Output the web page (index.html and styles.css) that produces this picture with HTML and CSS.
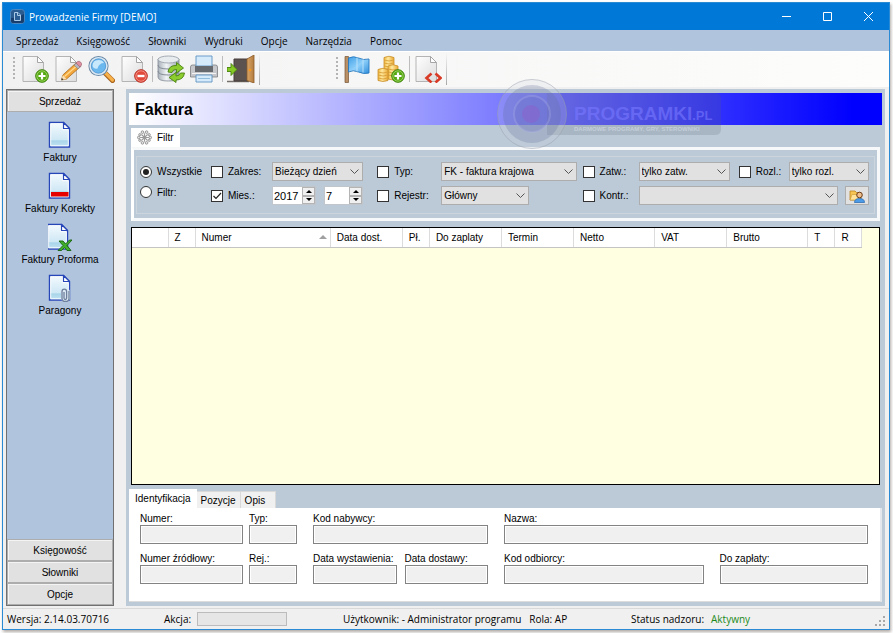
FILE: index.html
```html
<!DOCTYPE html>
<html lang="pl">
<head>
  <meta charset="UTF-8" />
  <meta name="viewport" content="width=device-width, initial-scale=1.0"/>
  <title>Prowadzenie Firmy [DEMO]</title>
  <link rel="stylesheet" href="styles.css">
</head>
<body>

  <!-- shared gradients and shapes -->
  <svg class="defs" aria-hidden="true">
    <defs>
      <linearGradient id="paper" x1="0" y1="0" x2="1" y2="1">
        <stop offset="0" stop-color="#ffffff"/>
        <stop offset="1" stop-color="#dcdcdc"/>
      </linearGradient>
      <linearGradient id="bluePaper" x1="0" y1="0" x2="0" y2="1">
        <stop offset="0" stop-color="#f4fafe"/>
        <stop offset="0.7" stop-color="#cfe8f5"/>
        <stop offset="0.75" stop-color="#a9d5ea"/>
        <stop offset="1" stop-color="#c4e4f2"/>
      </linearGradient>
      <linearGradient id="metal" x1="0" y1="0" x2="1" y2="0">
        <stop offset="0" stop-color="#a9b1b9"/>
        <stop offset="0.4" stop-color="#f1f4f6"/>
        <stop offset="1" stop-color="#9aa3ad"/>
      </linearGradient>
      <linearGradient id="gold" x1="0" y1="0" x2="1" y2="0">
        <stop offset="0" stop-color="#f0b63c"/>
        <stop offset="0.4" stop-color="#ffe9a0"/>
        <stop offset="1" stop-color="#eba832"/>
      </linearGradient>
      <linearGradient id="wood" x1="0" y1="0" x2="1" y2="0">
        <stop offset="0" stop-color="#d9a566"/>
        <stop offset="1" stop-color="#b57d40"/>
      </linearGradient>
      <linearGradient id="flagBlue" x1="0" y1="0" x2="1" y2="1">
        <stop offset="0" stop-color="#3f9fe6"/>
        <stop offset="0.5" stop-color="#8fd0fa"/>
        <stop offset="1" stop-color="#2f8fdc"/>
      </linearGradient>
      <symbol id="page" viewBox="0 0 28 28">
        <path d="M2 1.500h14.500l6 6V26.500H2z" fill="url(#paper)" stroke="#b4b4b4"/>
        <path d="M16.500 1.500v6h6z" fill="#fff" stroke="#a5a5a5" stroke-linejoin="round"/>
      </symbol>
      <symbol id="plus" viewBox="0 0 14 14">
        <circle cx="7" cy="7" r="6.300" fill="#56a812" stroke="#3c8208"/>
        <circle cx="7" cy="7" r="5.200" fill="none" stroke="#a5da6c" stroke-width="0.800"/>
        <path d="M7 3.500v7M3.500 7h7" stroke="#fff" stroke-width="2.200"/>
      </symbol>
      <symbol id="sheet" viewBox="0 0 24 28">
        <path d="M1.500 1.500h14l6 6V26h-20z" fill="url(#bluePaper)" stroke="#2746b8" stroke-width="1.400"/>
        <path d="M2.700 2.700h12v6h5.600V24.800H2.700z" fill="none" stroke="#fff" stroke-width="0.900"/>
        <path d="M15.500 1.500v6h6z" fill="#fff" stroke="#2746b8" stroke-width="1.200" stroke-linejoin="round"/>
      </symbol>
    </defs>
  </svg>

  <div class="window">
    <header class="titlebar">
      <svg class="app-icon" viewBox="0 0 15 15" aria-hidden="true">
        <rect x="0.500" y="0.500" width="14" height="14" rx="3" fill="#2a5c92" stroke="#4a86bf"/>
        <path d="M1 9q6 0 13-4v7q0 2-2 2H3q-2 0-2-2z" fill="#173e6c"/>
        <path d="M4.500 3.500h3.500l2.500 2.500v5.500h-6z" fill="#2a5c92" stroke="#a9c8e6"/>
        <path d="M7.500 3.500v3h3" fill="none" stroke="#a9c8e6"/>
      </svg>
      <h1 class="window-title">Prowadzenie Firmy [DEMO]</h1>
      <div class="window-controls">
        <button type="button" aria-label="Minimalizuj"><svg viewBox="0 0 11 11"><path d="M1 5.500h9"/></svg></button>
        <button type="button" aria-label="Maksymalizuj"><svg viewBox="0 0 11 11"><path d="M1.500 1.500h8v8h-8z"/></svg></button>
        <button type="button" aria-label="Zamknij"><svg viewBox="0 0 11 11"><path d="M1 1l9 9M10 1l-9 9"/></svg></button>
      </div>
    </header>

    <nav class="menubar">
      <a href="#">Sprzedaż</a>
      <a href="#">Księgowość</a>
      <a href="#">Słowniki</a>
      <a href="#">Wydruki</a>
      <a href="#">Opcje</a>
      <a href="#">Narzędzia</a>
      <a href="#">Pomoc</a>
    </nav>

    <div class="toolbar">
      <div class="toolstrip toolstrip-main">
        <span class="grip"></span>
        <button type="button" aria-label="Nowy">
          <svg viewBox="0 0 28 28"><use href="#page"/><use href="#plus" x="14" y="14" width="14" height="14"/></svg>
        </button>
        <button type="button" aria-label="Edytuj">
          <svg viewBox="0 0 28 28">
            <use href="#page"/>
            <path d="M7.500 25l1.300-5L21.500 8.500l4 4L12.500 24z" fill="#f3a53a" stroke="#a8691c" stroke-width="0.800"/>
            <path d="M10.500 21.500L23.500 10.300" stroke="#ffd78a" stroke-width="1.400"/>
            <path d="M20 10l3-2.600 4 4L24 14z" fill="#b4b4bf" stroke="#777" stroke-width="0.500"/>
            <path d="M22 8l1.700-1.500q1.500-.8 3 .7t.8 2.800L26 12z" fill="#df8fa0" stroke="#985a68" stroke-width="0.600"/>
            <path d="M7.500 25l1.300-5 3.700 4z" fill="#f8dfb6"/>
            <path d="M7.300 25.200l.6-2.300 1.700 1.700z" fill="#333"/>
          </svg>
        </button>
        <button type="button" aria-label="Szukaj">
          <svg viewBox="0 0 28 28">
            <path d="M17 17l8.500 8.500" stroke="#a8621c" stroke-width="5" stroke-linecap="round"/>
            <path d="M18.500 18l7 7" stroke="#f7b14a" stroke-width="3.200" stroke-linecap="round"/>
            <circle cx="11.500" cy="11" r="9.500" fill="#7fc4f3" stroke="#6f8aa5" stroke-width="1.200"/>
            <circle cx="11.500" cy="11" r="8.200" fill="none" stroke="#dce8f2" stroke-width="1.800"/>
            <circle cx="11.500" cy="11" r="7.200" fill="#6bb8ef" stroke="#4b8fca" stroke-width="0.700"/>
            <path d="M5.500 11q0-6 6-6 4 0 5.500 3-5 0-6.500 5.500-4 1-5-2.500z" fill="#c8e8fc"/>
          </svg>
        </button>
        <button type="button" aria-label="Usuń">
          <svg viewBox="0 0 28 28">
            <use href="#page"/>
            <circle cx="21" cy="21" r="6.300" fill="#e24a3b" stroke="#b52a1e"/>
            <circle cx="21" cy="21" r="5.200" fill="none" stroke="#f5a198" stroke-width="0.800"/>
            <path d="M17.500 21h7" stroke="#fff" stroke-width="2.400"/>
          </svg>
        </button>
        <span class="separator"></span>
        <button type="button" aria-label="Odśwież dane">
          <svg viewBox="0 0 28 28">
            <path d="M1 4v18q0 4 10.500 4T22 22V4z" fill="url(#metal)" stroke="#838c96" stroke-width="0.800"/>
            <path d="M1 10q0 4 10.500 4T22 10M1 16q0 4 10.500 4T22 16" fill="none" stroke="#838c96"/>
            <ellipse cx="11.500" cy="4.500" rx="10.500" ry="3.500" fill="#e8ecef" stroke="#929ba4" stroke-width="0.800"/>
            <path d="M11 17q1-7 8.500-6.500V7.500l7 5.500-7 5v-3.500q-3.500-.5-4.500 3z" fill="#8dcc2e" stroke="#48820e" stroke-width="0.900"/>
            <path d="M27.500 18q-1 7-8.500 7v2.500l-7-5 7-5V21q3.500 0 4.500-3z" fill="#8dcc2e" stroke="#48820e" stroke-width="0.900"/>
          </svg>
        </button>
        <button type="button" aria-label="Drukuj">
          <svg viewBox="0 0 28 28">
            <path d="M0.500 12q0-2 2-2h23q2 0 2 2v10h-27z" fill="#c5c7ca" stroke="#7b7e82" stroke-width="0.800"/>
            <path d="M6 11V1h16v10z" fill="#d5ebfb" stroke="#5f93c2" stroke-width="0.900"/>
            <path d="M5 11h18v6H5z" fill="#66696d"/>
            <path d="M2 18.500h24" stroke="#f4f4f4"/>
            <path d="M6 20h16v7H6z" fill="#d5ebfb" stroke="#5f93c2" stroke-width="0.900"/>
            <path d="M8 23.500h12" stroke="#93bddc"/>
          </svg>
        </button>
        <span class="separator"></span>
        <button type="button" aria-label="Wyjście">
          <svg viewBox="0 0 28 28">
            <path d="M0 26.500h22" stroke="#77706a" stroke-width="1.500"/>
            <path d="M7 4h14v22H7z" fill="#5c5250" stroke="#463d3a"/>
            <path d="M20 4l7-4v28l-7-2.500z" fill="url(#wood)" stroke="#8a5a28" stroke-width="0.800"/>
            <circle cx="23" cy="15" r="1.300" fill="#f79a1a"/>
            <path d="M0 12.500h4v-4l6 6-6 6v-4H0z" fill="#86c925" stroke="#46800c" stroke-width="0.900"/>
          </svg>
        </button>
        <span class="separator strip-end"></span>
      </div>

      <div class="toolstrip">
        <span class="grip"></span>
        <button type="button" aria-label="Flaga">
          <svg viewBox="0 0 28 28">
            <path d="M1 1.500h3.500v26H1z" fill="#b98f65" stroke="#765535" stroke-width="0.700"/>
            <path d="M4.500 3q5-2.500 10 0t10.500 1v14q-5 1.500-10.500-1t-10 0z" fill="url(#flagBlue)" stroke="#2878bd" stroke-width="0.900"/>
            <path d="M13 2.500v14M19 4.500v13" stroke="#bfe5fc" stroke-width="1.300" opacity="0.700"/>
          </svg>
        </button>
        <button type="button" aria-label="Dodaj wpłatę">
          <svg viewBox="0 0 28 28">
            <path d="M7 2.500q5-2.500 10 0V14H7z" fill="url(#gold)" stroke="#c98f2c" stroke-width="0.800"/>
            <path d="M7 5q5 2 10 0M7 8q5 2 10 0M7 11q5 2 10 0" fill="none" stroke="#d9a03a" stroke-width="0.900"/>
            <path d="M11 11q5-2.500 10 0v13q-5 2-10 0z" fill="url(#gold)" stroke="#c98f2c" stroke-width="0.800"/>
            <path d="M11 14q5 2 10 0M11 17q5 2 10 0M11 20q5 2 10 0" fill="none" stroke="#d9a03a" stroke-width="0.900"/>
            <path d="M1 14.500q5-2.500 10 0v11q-5 2-10 0z" fill="url(#gold)" stroke="#c98f2c" stroke-width="0.800"/>
            <path d="M1 17q5 2 10 0M1 20q5 2 10 0M1 23q5 2 10 0" fill="none" stroke="#d9a03a" stroke-width="0.900"/>
            <use href="#plus" x="14" y="14" width="14" height="14"/>
          </svg>
        </button>
        <span class="separator"></span>
        <button type="button" aria-label="Eksport XML">
          <svg viewBox="0 0 28 28">
            <use href="#page"/>
            <path d="M17.500 18.500L12.500 23l5 4.500M21.500 18.500l5 4.500-5 4.500" fill="none" stroke="#d93a26" stroke-width="2.600"/>
          </svg>
        </button>
        <span class="separator strip-end"></span>
      </div>
    </div>

    <div class="workspace">
      <aside class="sidebar">
        <button type="button" class="side-button">Sprzedaż</button>
        <nav class="side-links">
          <a href="#">
            <svg viewBox="0 0 24 28"><use href="#sheet"/></svg>
            Faktury
          </a>
          <a href="#">
            <svg viewBox="0 0 24 28"><use href="#sheet"/><path d="M3 20h17.500v4.500H3z" fill="#e60000"/></svg>
            Faktury Korekty
          </a>
          <a href="#">
            <svg viewBox="0 0 24 28">
              <use href="#sheet" x="-2" y="0" width="24" height="28"/>
              <path d="M11 18h4l2.500 3 4-4h2.500l-5 5.500 4 5h-4l-2.500-3-3 3H10l5-5z" fill="#3fae2a" stroke="#17610c" stroke-width="0.900"/>
            </svg>
            Faktury Proforma
          </a>
          <a href="#">
            <svg viewBox="0 0 24 28">
              <use href="#sheet"/>
              <rect x="13" y="15" width="9" height="12" rx="3" fill="#dbe9f3"/>
              <path d="M16 18v6q0 1.500 1.300 1.500t1.300-1.500v-6.500q0-2.300-2.300-2.300T14 17.500v7q0 3 3.500 3t3.500-3V17" fill="none" stroke="#6e7f9c" stroke-width="1.300"/>
            </svg>
            Paragony
          </a>
        </nav>
        <div class="side-bottom">
          <button type="button" class="side-button">Księgowość</button>
          <button type="button" class="side-button">Słowniki</button>
          <button type="button" class="side-button">Opcje</button>
        </div>
      </aside>

      <main class="content">
        <h2 class="banner">Faktura</h2>

        <svg class="watermark" viewBox="0 0 228 74" aria-hidden="true">
          <path d="M50 16H218q6 0 6 6V52q0 6-6 6H50z" fill="#5a6670" opacity="0.200"/>
          <circle cx="35" cy="37" r="34.500" fill="#c8ccd8" fill-opacity="0.200" stroke="#9aa0ac" stroke-opacity="0.500"/>
          <circle cx="35" cy="37" r="29" fill="#5c6a96" opacity="0.250"/>
          <circle cx="35" cy="37" r="18" fill="#6a70c8" fill-opacity="0.300" stroke="#b0b4e8" stroke-opacity="0.300" stroke-width="2"/>
          <circle cx="34" cy="37" r="9" fill="#a050c0" opacity="0.300"/>
          <text x="77" y="43" class="mark-name">PROGRAMKI<tspan class="mark-tld">.PL</tspan></text>
          <text x="77" y="54" class="mark-sub">DARMOWE PROGRAMY, GRY, STEROWNIKI</text>
        </svg>

        <section class="filter">
          <button type="button" class="filter-tab">
            <svg viewBox="0 0 16 16" aria-hidden="true">
              <g fill="none" stroke="#9a9a9a" stroke-width="1.200">
                <path d="M8 3.500v9M3.500 8h9M4.800 4.800l6.400 6.400M11.200 4.800l-6.400 6.400"/>
              </g>
              <g fill="#e6e6e6" stroke="#8a8a8a" stroke-width="0.900">
                <circle cx="5.800" cy="2.300" r="1.400"/><circle cx="10.200" cy="2.300" r="1.400"/>
                <circle cx="5.800" cy="13.700" r="1.400"/><circle cx="10.200" cy="13.700" r="1.400"/>
                <circle cx="1.900" cy="8" r="1.400"/><circle cx="14.100" cy="8" r="1.400"/>
                <circle cx="3" cy="5" r="1.200"/><circle cx="13" cy="5" r="1.200"/>
                <circle cx="3" cy="11" r="1.200"/><circle cx="13" cy="11" r="1.200"/>
              </g>
            </svg>
            Filtr
          </button>
          <form class="filter-page">
            <div class="filter-grid">
              <label class="check"><input type="radio" name="mode" checked> Wszystkie</label>
              <label class="check"><input type="checkbox"> Zakres:</label>
              <select aria-label="Zakres"><option>Bieżący dzień</option></select>
              <label class="check gap-wide"><input type="checkbox"> Typ:</label>
              <select aria-label="Typ"><option>FK - faktura krajowa</option></select>
              <label class="check gap-small"><input type="checkbox"> Zatw.:</label>
              <select aria-label="Zatwierdzenie"><option>tylko zatw.</option></select>
              <label class="check gap-medium"><input type="checkbox"> Rozl.:</label>
              <select aria-label="Rozliczenie"><option>tylko rozl.</option></select>

              <label class="check radio-low"><input type="radio" name="mode"> Filtr:</label>
              <label class="check"><input type="checkbox" checked> Mies.:</label>
              <div class="period">
                <div class="spinner">
                  <input type="text" inputmode="numeric" value="2017" aria-label="Rok">
                  <div class="spin-buttons">
                    <button type="button" class="up" aria-label="Rok w górę"></button>
                    <button type="button" class="down" aria-label="Rok w dół"></button>
                  </div>
                </div>
                <div class="spinner">
                  <input type="text" inputmode="numeric" value="7" aria-label="Miesiąc">
                  <div class="spin-buttons">
                    <button type="button" class="up" aria-label="Miesiąc w górę"></button>
                    <button type="button" class="down" aria-label="Miesiąc w dół"></button>
                  </div>
                </div>
              </div>
              <label class="check gap-wide"><input type="checkbox"> Rejestr:</label>
              <select class="register" aria-label="Rejestr"><option>Główny</option></select>
              <label class="check gap-small"><input type="checkbox"> Kontr.:</label>
              <div class="contractor">
                <select aria-label="Kontrahent"><option></option></select>
                <button type="button" class="pick" aria-label="Wybierz kontrahenta">
                  <svg viewBox="0 0 16 14">
                    <path d="M1 2h5l1.500 1.500H12V11H1z" fill="#f7c553" stroke="#b98422" stroke-width="0.800"/>
                    <path d="M1 11l2-5.500h9L10.500 11z" fill="#ffe39a" stroke="#c9962f" stroke-width="0.600"/>
                    <circle cx="10.500" cy="6" r="2.800" fill="#f0bd8c" stroke="#6b3d18"/>
                    <path d="M5.500 13.500q0-4 5-4t5 4z" fill="#4c9be8" stroke="#2365ad" stroke-width="0.700"/>
                  </svg>
                </button>
              </div>
            </div>
          </form>
        </section>

        <div class="list">
          <table>
            <colgroup>
              <col class="w-mark"><col class="w-flag"><col class="w-number"><col class="w-date">
              <col class="w-flag"><col class="w-date"><col class="w-date"><col class="w-sum">
              <col class="w-date"><col class="w-sum"><col class="w-flag"><col class="w-flag"><col class="w-rest">
            </colgroup>
            <thead>
              <tr>
                <th></th>
                <th>Z</th>
                <th class="sorted">Numer</th>
                <th>Data dost.</th>
                <th>Pł.</th>
                <th>Do zaplaty</th>
                <th>Termin</th>
                <th>Netto</th>
                <th>VAT</th>
                <th>Brutto</th>
                <th>T</th>
                <th>R</th>
                <td></td>
              </tr>
            </thead>
          </table>
        </div>

        <section class="details">
          <div class="tabs">
            <button type="button" class="tab active">Identyfikacja</button>
            <button type="button" class="tab">Pozycje</button>
            <button type="button" class="tab">Opis</button>
          </div>
          <form class="details-page">
            <div class="fields fields-number">
              <label>Numer:<input type="text" readonly></label>
              <label>Typ:<input type="text" readonly></label>
              <label>Numer źródłowy:<input type="text" readonly></label>
              <label>Rej.:<input type="text" readonly></label>
            </div>
            <div class="fields fields-dates">
              <label class="full">Kod nabywcy:<input type="text" readonly></label>
              <label>Data wystawienia:<input type="text" readonly></label>
              <label>Data dostawy:<input type="text" readonly></label>
            </div>
            <div class="fields fields-name">
              <label class="full">Nazwa:<input type="text" readonly></label>
              <label>Kod odbiorcy:<input type="text" readonly></label>
              <label>Do zapłaty:<input type="text" readonly></label>
            </div>
          </form>
        </section>
      </main>
    </div>

    <footer class="statusbar">
      <span class="version">Wersja: 2.14.03.70716</span>
      <span class="action">Akcja: <span class="progress"></span></span>
      <span class="user"><span>Użytkownik: - Administrator programu</span><span>Rola: AP</span></span>
      <span class="status"><span>Status nadzoru:</span><span class="ok">Aktywny</span></span>
      <svg class="resize" viewBox="0 0 10 10" aria-hidden="true">
        <path d="M8 0h2v2H8zM4 4h2v2H4zM8 4h2v2H8zM0 8h2v2H0zM4 8h2v2H4zM8 8h2v2H8z" fill="#a8a8a8"/>
      </svg>
    </footer>
  </div>

</body>
</html>
```
FILE: styles.css
```css
* {
  box-sizing: border-box;
}

body {
  margin: 0;
  padding: 2px 3px 3px 2px;
  height: 100vh;
  min-height: 520px;
  background-color: #fff;
  font-family: "Liberation Sans", Arial, sans-serif;
  font-size: 10px;
  color: #000;
}

button,
input,
select {
  font: inherit;
  color: inherit;
  margin: 0;
}

button {
  padding: 0;
}

a {
  color: inherit;
  text-decoration: none;
}

svg {
  display: block;
}

.defs {
  position: absolute;
  width: 0;
  height: 0;
}

.window {
  height: 100%;
  display: flex;
  flex-direction: column;
  border: 1px solid #2a8ad4;
  background-color: #f0f0f0;
  box-shadow: 1px 2px 3px #b0aaa6;
}

/* title bar and menu */

.titlebar {
  display: flex;
  align-items: center;
  height: 27px;
  padding-left: 7px;
  background-color: #0078d7;
  color: #fff;
}

.app-icon {
  width: 15px;
  height: 15px;
}

.window-title {
  flex: 1;
  margin: 0 0 0 4px;
  font-family: "Open Sans", "Noto Sans", sans-serif;
  font-size: 10px;
  font-weight: normal;
}

.window-controls {
  display: flex;
}

.window-controls button {
  display: grid;
  place-items: center;
  width: 41px;
  height: 27px;
  border: none;
  background: none;
}

.window-controls svg {
  width: 11px;
  height: 11px;
  fill: none;
  stroke: #fff;
}

.menubar {
  display: flex;
  align-items: center;
  gap: 18px;
  height: 21px;
  padding-left: 13px;
  background-color: #b0c4de;
  font-family: "Open Sans", "Noto Sans", sans-serif;
  font-size: 10px;
}

/* toolbar */

.toolbar {
  display: flex;
  height: 36px;
  padding-left: 9px;
  background: linear-gradient(to right, #f2f2f2, #fdfdfc);
  border-top: 1px solid #fff;
}

.toolstrip {
  display: flex;
  align-items: center;
  gap: 5px;
  height: 33px;
}

.toolstrip-main {
  margin-right: 76px;
}

.toolstrip button {
  width: 28px;
  height: 28px;
  border: none;
  background: none;
}

.toolstrip svg {
  width: 28px;
  height: 28px;
}

.grip {
  width: 2px;
  height: 24px;
  margin: 0 1px;
  background: repeating-linear-gradient(to bottom, #b4b4b4 0 2px, transparent 2px 4px);
}

.separator {
  width: 1px;
  height: 26px;
  margin: 0 -1px;
  background-color: #bdbdbd;
}

.strip-end {
  height: 32px;
  background: linear-gradient(to bottom, transparent, #a8a8a8);
}

/* sidebar */

.workspace {
  flex: 1;
  display: flex;
  gap: 12px;
  min-height: 0;
  padding: 2px 4px 2px 3px;
}

.sidebar {
  display: flex;
  flex-direction: column;
  width: 108px;
  background-color: #b0c4de;
  border: 1px solid #707070;
}

.side-button {
  width: 100%;
  height: 22px;
  background-color: #e1e1e1;
  border: 1px solid #adadad;
  box-shadow: inset 1px 1px #f4f4f4;
}

.side-links {
  flex: 1;
  display: flex;
  flex-direction: column;
  align-items: center;
  gap: 8px;
  padding-top: 9px;
}

.side-links a {
  display: flex;
  flex-direction: column;
  align-items: center;
  gap: 3px;
  line-height: 12px;
}

.side-links svg {
  width: 24px;
  height: 28px;
}

.side-bottom {
  display: flex;
  flex-direction: column;
}

/* main panel */

.content {
  flex: 1;
  position: relative;
  display: flex;
  flex-direction: column;
  min-width: 0;
  padding: 4px 3px 4px 3px;
  background-color: #bccad8;
}

.banner {
  margin: 0;
  padding-left: 6px;
  height: 32px;
  line-height: 33px;
  font-size: 16px;
  background: linear-gradient(to right, #fff, #00f 96%);
}

.watermark {
  position: absolute;
  top: -12px;
  left: 371px;
  width: 228px;
  height: 74px;
  pointer-events: none;
}

.mark-name {
  font-size: 19px;
  font-weight: bold;
  fill: #7878ff;
  fill-opacity: 0.6;
}

.mark-tld {
  font-size: 13px;
}

.mark-sub {
  font-size: 6px;
  font-weight: bold;
  fill: #d8e0ea;
  fill-opacity: 0.6;
}

.filter {
  margin: 3px 2px 0 2px;
}

.filter-tab {
  display: flex;
  align-items: center;
  gap: 5px;
  height: 19px;
  padding: 0 6px;
  border: none;
  background-color: #fff;
}

.filter-tab svg {
  width: 15px;
  height: 15px;
}

.filter-page {
  padding: 6px 2px 4px;
  border: 3px solid #f6f8fa;
  border-left-color: #fff;
}

.filter-grid {
  display: grid;
  grid-template-columns:
    71px 61px minmax(0, 91fr) 78px minmax(0, 135fr)
    62px minmax(0, 91fr) 59px minmax(0, 80fr);
  row-gap: 5px;
  align-items: center;
  padding: 5px 5px 8px 3px;
  border: 1px solid #ccd5de;
}

.check {
  display: flex;
  align-items: center;
  gap: 5px;
}

.gap-wide {
  padding-left: 14px;
}

.gap-medium {
  padding-left: 9px;
}

.gap-small {
  padding-left: 6px;
}

.radio-low {
  align-self: start;
}

.check input {
  appearance: none;
  display: grid;
  place-content: center;
  width: 12px;
  height: 12px;
  border: 1px solid #333;
  background-color: #fff;
}

.check input[type="radio"] {
  border-radius: 50%;
}

.check input[type="radio"]:checked::before {
  content: "";
  width: 6px;
  height: 6px;
  border-radius: 50%;
  background-color: #222;
}

.check input[type="checkbox"]:checked {
  background: #fff url("data:image/svg+xml,%3Csvg xmlns='http://www.w3.org/2000/svg' viewBox='0 0 10 10'%3E%3Cpath d='M1.500 5l2.500 2.500 5-5.500' fill='none' stroke='%23222' stroke-width='1.200'/%3E%3C/svg%3E") center / 10px no-repeat;
}

select {
  appearance: none;
  width: 100%;
  min-width: 0;
  height: 19px;
  padding: 0 14px 0 2px;
  border: 1px solid #adadad;
  border-radius: 0;
  background: #e1e1e1 url("data:image/svg+xml,%3Csvg xmlns='http://www.w3.org/2000/svg' viewBox='0 0 9 5'%3E%3Cpath d='M.5.5l4 4 4-4' fill='none' stroke='%23555'/%3E%3C/svg%3E") right 3px center / 9px 5px no-repeat;
}

.period {
  display: flex;
  gap: 8px;
}

.spinner {
  display: flex;
  flex: 44 1 0;
  min-width: 0;
  height: 19px;
  border: 1px solid #c0c6cc;
  background-color: #fff;
}

.spinner + .spinner {
  flex-grow: 39;
}

.spinner input {
  flex: 1;
  width: 0;
  min-width: 0;
  padding: 0 1px;
  border: none;
  font-size: 11px;
}

.spin-buttons {
  display: flex;
  flex-direction: column;
  width: 13px;
}

.spin-buttons button {
  display: grid;
  place-content: center;
  flex: 1;
  min-height: 0;
  border: 1px solid #b4b4b4;
  background-color: #f0f0f0;
}

.spin-buttons button::before {
  content: "";
  border: 3px solid transparent;
}

.spin-buttons .up::before {
  border-top: none;
  border-bottom-color: #000;
}

.spin-buttons .down::before {
  border-bottom: none;
  border-top-color: #000;
}

.register {
  width: 65%;
}

.contractor {
  grid-column: span 3;
  display: flex;
  gap: 7px;
}

.contractor select {
  flex: 1;
}

.pick {
  display: grid;
  place-items: center;
  width: 24px;
  height: 19px;
  border: 1px solid #adadad;
  background-color: #e1e1e1;
}

.pick svg {
  width: 16px;
  height: 14px;
}

/* invoice list */

.list {
  flex: 1;
  min-height: 60px;
  margin: 6px 2px 0 2px;
  border: 1px solid #000;
  background-color: #ffffe1;
}

.list table {
  width: 100%;
  table-layout: fixed;
  border-collapse: collapse;
}

.list th {
  height: 19px;
  padding: 0 0 0 6px;
  border-right: 1px solid #dcdcdc;
  border-bottom: 1px solid #c4c4c4;
  background-color: #fff;
  font-weight: normal;
  text-align: left;
  white-space: nowrap;
}

.list .sorted {
  background: #fff url("data:image/svg+xml,%3Csvg xmlns='http://www.w3.org/2000/svg' viewBox='0 0 8 4'%3E%3Cpath d='M0 4l4-4 4 4z' fill='%23a0a0a0'/%3E%3C/svg%3E") right 3px center / 8px 4px no-repeat;
}

.w-mark { width: 36px; }
.w-flag { width: 27px; }
.w-number { width: 135px; }
.w-date { width: 72px; }
.w-sum { width: 81px; }
.w-rest { width: 17px; }

/* details */

.details {
  margin-top: 4px;
}

.tabs {
  display: flex;
  align-items: flex-end;
  height: 19px;
}

.tab {
  height: 17px;
  padding: 0 4px;
  border: 1px solid #d9d9d9;
  border-bottom: none;
  border-left: none;
  background-color: #f0f0f0;
}

.tab:last-child {
  padding-right: 10px;
}

.tab.active {
  height: 19px;
  padding: 0 6px;
  border: none;
  background-color: #fff;
}

.details-page {
  display: grid;
  grid-template-columns: 157fr 175fr 364fr;
  gap: 16px;
  padding: 4px 12px 17px 11px;
  border-right: 2px solid #e4e8ec;
  border-bottom: 1px solid #dcdcdc;
  background-color: #fff;
}

.fields {
  display: grid;
  align-content: start;
  gap: 8px;
}

.fields-number {
  grid-template-columns: 103fr 48fr;
  column-gap: 6px;
}

.fields-dates {
  grid-template-columns: 1fr 1fr;
}

.fields-name {
  grid-template-columns: 199fr 148fr;
  column-gap: 16px;
}

.fields label {
  line-height: 13px;
  white-space: nowrap;
}

.fields input {
  display: block;
  width: 100%;
  height: 19px;
  border: 1px solid #838383;
  background-color: #f0f0f0;
  box-shadow: inset 0 0 0 1px #fff;
}

.full {
  grid-column: 1 / -1;
}

/* status bar */

.statusbar {
  display: flex;
  align-items: center;
  height: 21px;
  padding: 0 4px;
  border-top: 1px solid #d9d9d9;
  font-family: "Open Sans", "Noto Sans", sans-serif;
  font-size: 10px;
  white-space: nowrap;
}

.version {
  width: 157px;
}

.action {
  display: flex;
  align-items: center;
  gap: 6px;
  width: 179px;
}

.progress {
  width: 90px;
  height: 14px;
  border: 1px solid #bcbcbc;
  background-color: #e6e6e6;
}

.user {
  display: flex;
  gap: 8px;
  width: 288px;
}

.status {
  display: flex;
  flex: 1;
  gap: 7px;
}

.ok {
  color: #1a8a1a;
}

.resize {
  width: 10px;
  height: 10px;
  align-self: flex-end;
  margin-bottom: 3px;
}
```
